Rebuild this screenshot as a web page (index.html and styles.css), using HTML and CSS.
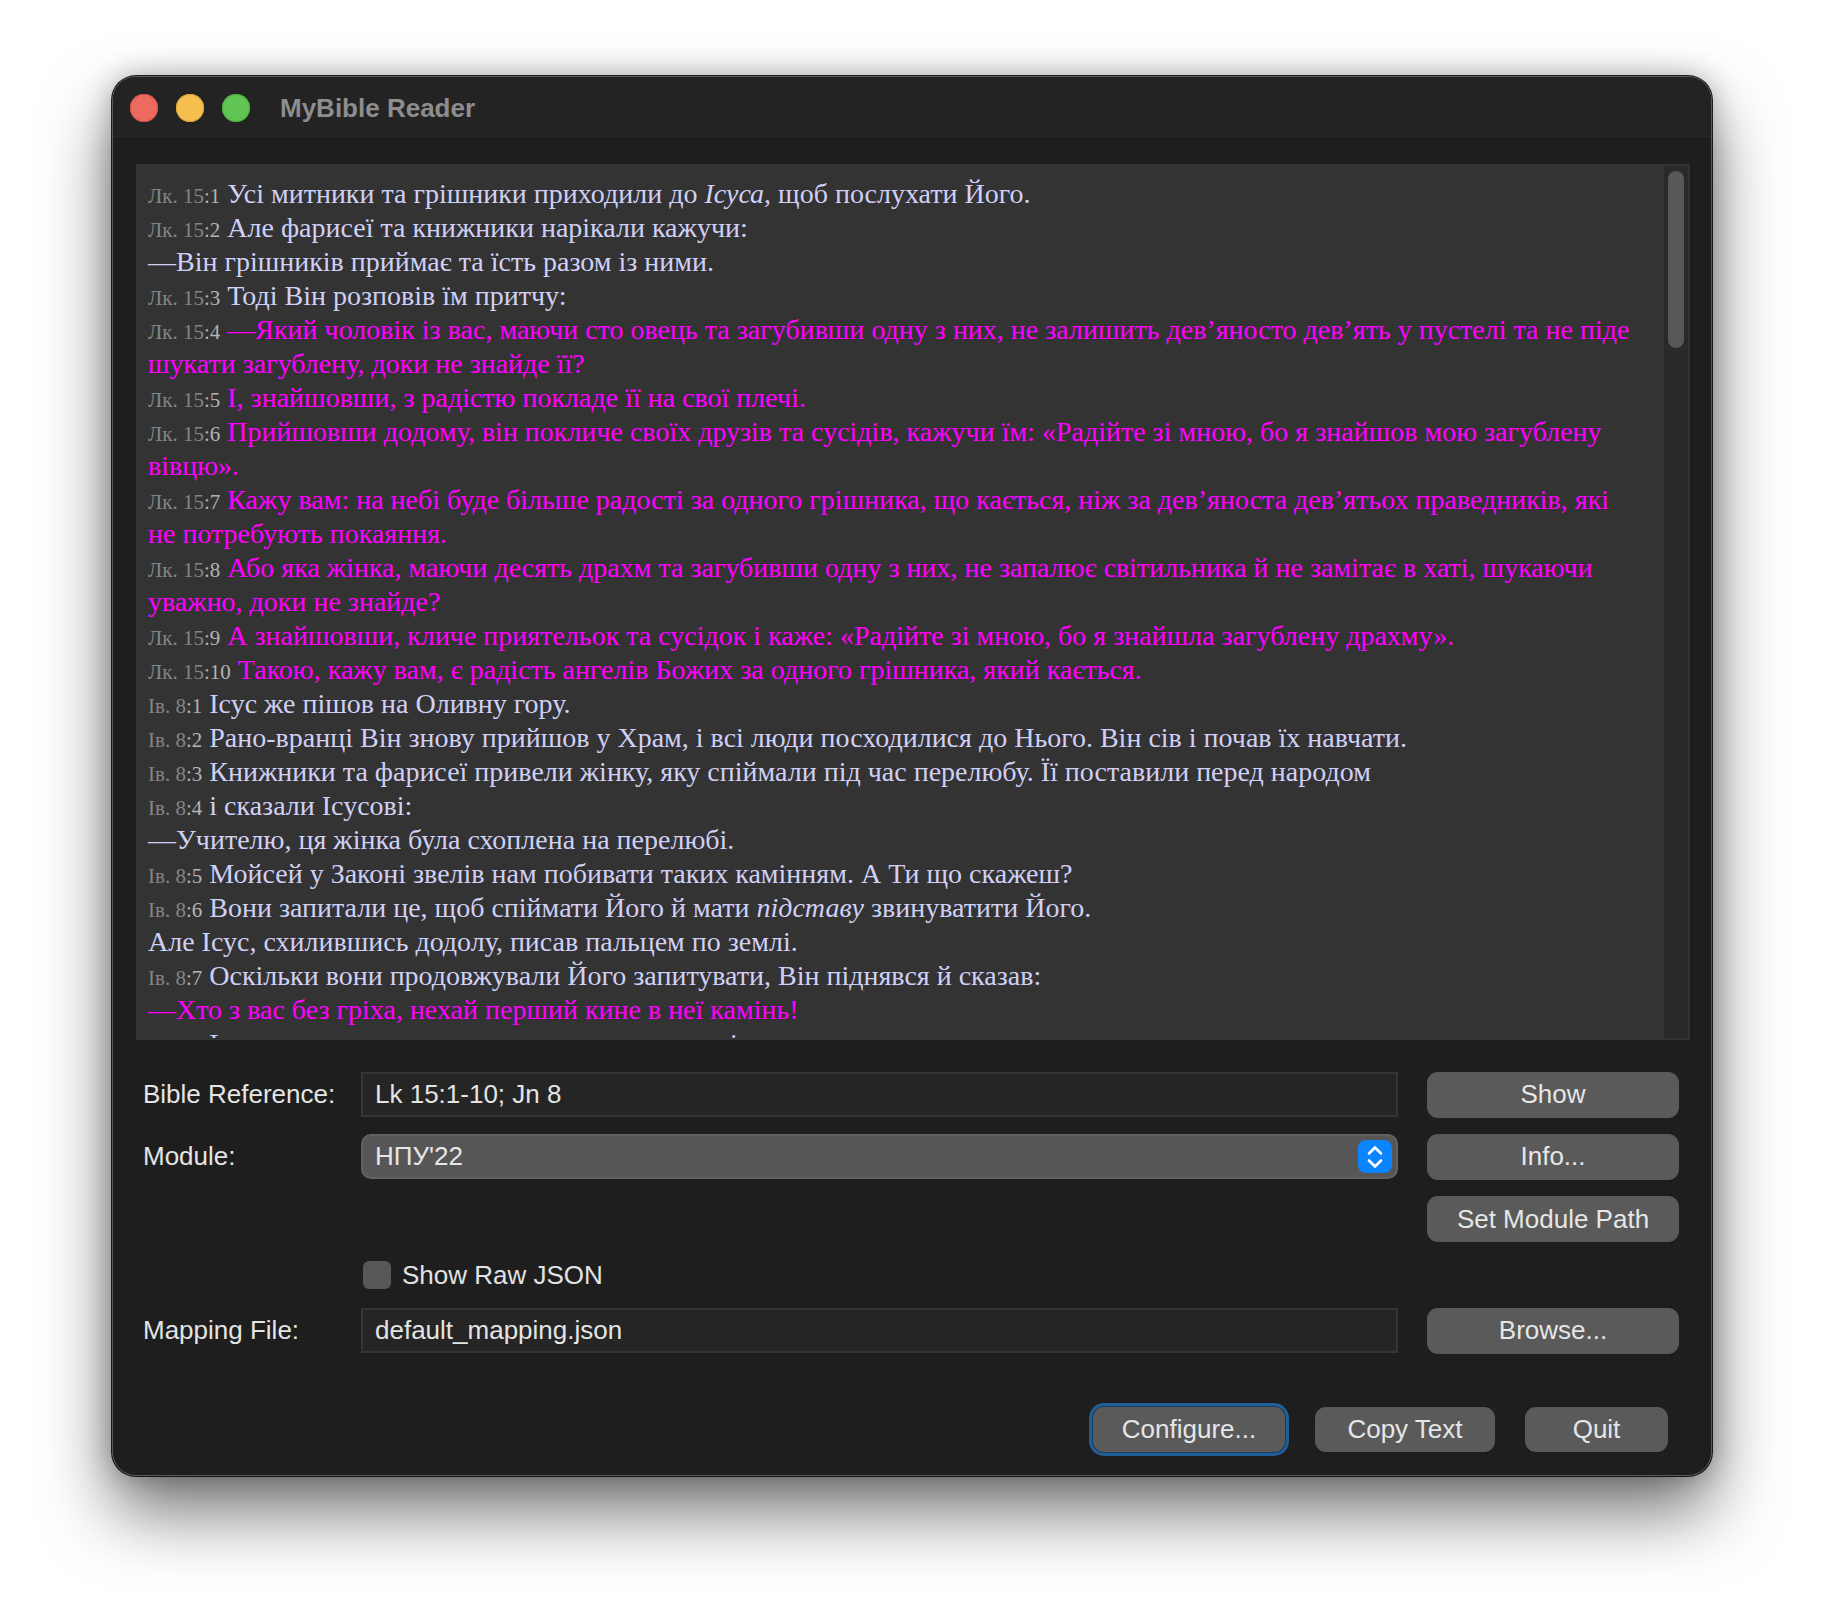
FILE: index.html
```html
<!DOCTYPE html>
<html lang="uk">
<head>
<meta charset="utf-8">
<title>MyBible Reader</title>
<link rel="stylesheet" href="styles.css">
</head>
<body>
<div class="window">
  <div class="titlebar">
    <span class="light red"></span>
    <span class="light yellow"></span>
    <span class="light green"></span>
    <span class="title">MyBible Reader</span>
  </div>
  <div class="content">
    <div class="reader">
      <div class="text">
        <div class="ln"><span class="ref">Лк. 15<span class="v">:1</span></span> Усі митники та грішники приходили до <i>Ісуса</i>, щоб послухати Його.</div>
        <div class="ln"><span class="ref">Лк. 15<span class="v">:2</span></span> Але фарисеї та книжники нарікали кажучи:</div>
        <div class="ln">—Він грішників приймає та їсть разом із ними.</div>
        <div class="ln"><span class="ref">Лк. 15<span class="v">:3</span></span> Тоді Він розповів їм притчу:</div>
        <div class="ln"><span class="ref">Лк. 15<span class="v">:4</span></span> <span class="red">—Який чоловік із вас, маючи сто овець та загубивши одну з них, не залишить дев’яносто дев’ять у пустелі та не піде<br>шукати загублену, доки не знайде її?</span></div>
        <div class="ln"><span class="ref">Лк. 15<span class="v">:5</span></span> <span class="red">І, знайшовши, з радістю покладе її на свої плечі.</span></div>
        <div class="ln"><span class="ref">Лк. 15<span class="v">:6</span></span> <span class="red">Прийшовши додому, він покличе своїх друзів та сусідів, кажучи їм: «Радійте зі мною, бо я знайшов мою загублену<br>вівцю».</span></div>
        <div class="ln"><span class="ref">Лк. 15<span class="v">:7</span></span> <span class="red">Кажу вам: на небі буде більше радості за одного грішника, що кається, ніж за дев’яноста дев’ятьох праведників, які<br>не потребують покаяння.</span></div>
        <div class="ln"><span class="ref">Лк. 15<span class="v">:8</span></span> <span class="red">Або яка жінка, маючи десять драхм та загубивши одну з них, не запалює світильника й не замітає в хаті, шукаючи<br>уважно, доки не знайде?</span></div>
        <div class="ln"><span class="ref">Лк. 15<span class="v">:9</span></span> <span class="red">А знайшовши, кличе приятельок та сусідок і каже: «Радійте зі мною, бо я знайшла загублену драхму».</span></div>
        <div class="ln"><span class="ref">Лк. 15<span class="v">:10</span></span> <span class="red">Такою, кажу вам, є радість ангелів Божих за одного грішника, який кається.</span></div>
        <div class="ln"><span class="ref">Ів. 8<span class="v">:1</span></span> Ісус же пішов на Оливну гору.</div>
        <div class="ln"><span class="ref">Ів. 8<span class="v">:2</span></span> Рано-вранці Він знову прийшов у Храм, і всі люди посходилися до Нього. Він сів і почав їх навчати.</div>
        <div class="ln"><span class="ref">Ів. 8<span class="v">:3</span></span> Книжники та фарисеї привели жінку, яку спіймали під час перелюбу. Її поставили перед народом</div>
        <div class="ln"><span class="ref">Ів. 8<span class="v">:4</span></span> і сказали Ісусові:</div>
        <div class="ln">—Учителю, ця жінка була схоплена на перелюбі.</div>
        <div class="ln"><span class="ref">Ів. 8<span class="v">:5</span></span> Мойсей у Законі звелів нам побивати таких камінням. А Ти що скажеш?</div>
        <div class="ln"><span class="ref">Ів. 8<span class="v">:6</span></span> Вони запитали це, щоб спіймати Його й мати <i>підставу</i> звинуватити Його.</div>
        <div class="ln">Але Ісус, схилившись додолу, писав пальцем по землі.</div>
        <div class="ln"><span class="ref">Ів. 8<span class="v">:7</span></span> Оскільки вони продовжували Його запитувати, Він піднявся й сказав:</div>
        <div class="ln"><span class="red">—Хто з вас без гріха, нехай перший кине в неї камінь!</span></div>
        <div class="ln"><span class="ref">Ів. 8<span class="v">:8</span></span> І знову, нахилившись додолу, писав на землі.</div>
      </div>
      <div class="scrollbar"><div class="thumb"></div></div>
    </div>

    <div class="form">
      <label class="label">Bible Reference:</label>
      <div class="field">Lk 15:1-10; Jn 8</div>
      <div class="btn">Show</div>

      <label class="label">Module:</label>
      <div class="select">
        <span>НПУ'22</span>
        <span class="stepper">
          <svg width="20" height="26" viewBox="0 0 20 26"><path d="M4 9.5 L10 3.5 L16 9.5 M4 16.5 L10 22.5 L16 16.5" fill="none" stroke="#fff" stroke-width="2.6" stroke-linecap="round" stroke-linejoin="round"/></svg>
        </span>
      </div>
      <div class="btn">Info...</div>

      <div></div>
      <div></div>
      <div class="btn">Set Module Path</div>

      <div></div>
      <div class="check"><span class="box"></span><span>Show Raw JSON</span></div>
      <div></div>

      <label class="label">Mapping File:</label>
      <div class="field">default_mapping.json</div>
      <div class="btn">Browse...</div>
    </div>

    <div class="actions">
      <div class="btn focus">Configure...</div>
      <div class="btn w-copy">Copy Text</div>
      <div class="btn w-quit">Quit</div>
    </div>
  </div>
</div>
</body>
</html>
```

FILE: styles.css
```css
* { box-sizing: border-box; }

html, body {
  margin: 0;
  background: #ffffff;
}

body {
  padding: 76px 112px 148px 112px;
  font-family: "Liberation Sans", Arial, sans-serif;
}

.window {
  width: 1600px;
  height: 1400px;
  background: #1e1e1e;
  border-radius: 24px;
  border: 1px solid #5a5a5a;
  box-shadow: 0 0 0 1px rgba(0,0,0,0.85), 0 36px 70px rgba(0,0,0,0.55), 0 0 28px rgba(0,0,0,0.28);
  overflow: hidden;
  display: flex;
  flex-direction: column;
}

.titlebar {
  height: 62px;
  flex: none;
  display: flex;
  align-items: center;
  padding-left: 17px;
  gap: 18px;
  background: #232323;
  border-bottom: 1px solid #191919;
}

.light {
  width: 28px;
  height: 28px;
  border-radius: 50%;
  flex: none;
}
.light.red { background: #ed6a5e; box-shadow: inset 0 0 0 1px #d2554a; }
.light.yellow { background: #f4bf4f; box-shadow: inset 0 0 0 1px #d9a33b; }
.light.green { background: #61c554; box-shadow: inset 0 0 0 1px #4eaa42; }

.title {
  margin-left: 12px;
  margin-top: 2px;
  font-size: 26px;
  font-weight: bold;
  color: #8d8d8d;
}

.content {
  flex: 1;
  display: flex;
  flex-direction: column;
  padding: 25px 21px 0 23px;
}

.reader {
  height: 876px;
  flex: none;
  display: flex;
  background: #333333;
  padding: 2px;
}

.text {
  flex: 1;
  overflow: hidden;
  padding: 11px 10px 0 10px;
  font-family: "Liberation Serif", "Times New Roman", serif;
  font-size: 28px;
  line-height: 34px;
  color: #d0d0f6;
  white-space: nowrap;
}

.ref {
  font-size: 21px;
  line-height: 0;
  color: #858585;
}
.ref .v { color: #b3b3b3; }

.red { color: #ff00ff; }

.scrollbar {
  width: 24px;
  flex: none;
  background: #292929;
  padding: 5px 4px 0 4px;
}
.thumb {
  height: 177px;
  border-radius: 8px;
  background: #575757;
}

.form {
  margin-top: 32px;
  padding: 0 0 0 7px;
  display: grid;
  grid-template-columns: 218px 1037px 281px;
  grid-template-rows: 45px 45px 46px 32px 45px;
  row-gap: 17px;
  align-items: center;
  font-size: 26px;
  color: #e2e2e2;
}
.form .btn { margin-left: 29px; width: 252px; }

.label {
  color: #e4e4e4;
  white-space: nowrap;
}

.field {
  height: 45px;
  display: flex;
  align-items: center;
  padding-left: 12px;
  background: #252525;
  border: 2px solid #353535;
  color: #e4e4e4;
}

.select {
  height: 45px;
  display: flex;
  align-items: center;
  justify-content: space-between;
  padding: 0 4px 0 12px;
  background: #565656;
  border: 2px solid #626262;
  border-radius: 10px;
  color: #e6e6e6;
}

.stepper {
  width: 34px;
  height: 33px;
  border-radius: 8px;
  background: #0b84ff;
  display: flex;
  align-items: center;
  justify-content: center;
}

.btn {
  height: 46px;
  display: flex;
  align-items: center;
  justify-content: center;
  background: #5a5a5a;
  border-radius: 11px;
  color: #e6e6e6;
  font-size: 26px;
}

.check {
  display: flex;
  align-items: center;
  gap: 11px;
  padding-left: 2px;
}
.box {
  width: 28px;
  height: 28px;
  border-radius: 6px;
  background: #575757;
}

.actions {
  margin-top: 54px;
  display: flex;
  justify-content: flex-end;
  gap: 30px;
  padding-right: 22px;
}
.actions .btn { height: 45px; }
.btn.focus {
  width: 192px;
  box-shadow: 0 0 0 1px #1b3c5c, 0 0 0 4px #1f5f96;
}
.btn.w-copy { width: 180px; }
.btn.w-quit { width: 143px; }
```
